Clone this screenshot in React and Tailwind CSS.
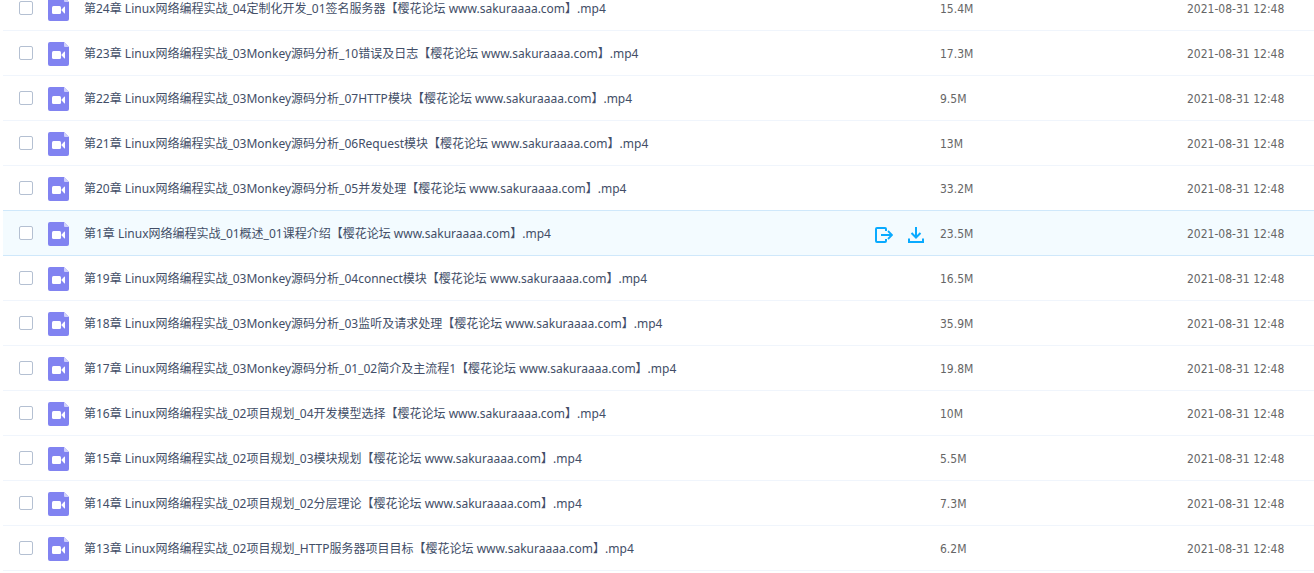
import { useState } from 'react';

const files = [
  { name: '第24章 Linux网络编程实战_04定制化开发_01签名服务器【樱花论坛 www.sakuraaaa.com】.mp4', size: '15.4M' },
  { name: '第23章 Linux网络编程实战_03Monkey源码分析_10错误及日志【樱花论坛 www.sakuraaaa.com】.mp4', size: '17.3M' },
  { name: '第22章 Linux网络编程实战_03Monkey源码分析_07HTTP模块【樱花论坛 www.sakuraaaa.com】.mp4', size: '9.5M' },
  { name: '第21章 Linux网络编程实战_03Monkey源码分析_06Request模块【樱花论坛 www.sakuraaaa.com】.mp4', size: '13M' },
  { name: '第20章 Linux网络编程实战_03Monkey源码分析_05并发处理【樱花论坛 www.sakuraaaa.com】.mp4', size: '33.2M' },
  { name: '第1章 Linux网络编程实战_01概述_01课程介绍【樱花论坛 www.sakuraaaa.com】.mp4', size: '23.5M' },
  { name: '第19章 Linux网络编程实战_03Monkey源码分析_04connect模块【樱花论坛 www.sakuraaaa.com】.mp4', size: '16.5M' },
  { name: '第18章 Linux网络编程实战_03Monkey源码分析_03监听及请求处理【樱花论坛 www.sakuraaaa.com】.mp4', size: '35.9M' },
  { name: '第17章 Linux网络编程实战_03Monkey源码分析_01_02简介及主流程1【樱花论坛 www.sakuraaaa.com】.mp4', size: '19.8M' },
  { name: '第16章 Linux网络编程实战_02项目规划_04开发模型选择【樱花论坛 www.sakuraaaa.com】.mp4', size: '10M' },
  { name: '第15章 Linux网络编程实战_02项目规划_03模块规划【樱花论坛 www.sakuraaaa.com】.mp4', size: '5.5M' },
  { name: '第14章 Linux网络编程实战_02项目规划_02分层理论【樱花论坛 www.sakuraaaa.com】.mp4', size: '7.3M' },
  { name: '第13章 Linux网络编程实战_02项目规划_HTTP服务器项目目标【樱花论坛 www.sakuraaaa.com】.mp4', size: '6.2M' }
];

function VideoIcon() {
  return (
    <svg className="mt-0.5 h-6 w-[21px] shrink-0" viewBox="0 0 21 24" aria-hidden="true">
      <path d="M2 0h14l5 5v17a2 2 0 0 1-2 2H2a2 2 0 0 1-2-2V2a2 2 0 0 1 2-2z" fill="#8183f1" />
      <path d="M16 0l5 5h-4a1 1 0 0 1-1-1z" fill="#cfd0fb" />
      <rect x="4" y="9" width="9" height="8" rx="1.5" fill="#fff" />
      <path d="M13.2 13l3-3.2q.8-.6.8.3v5.8q0 .9-.8.3z" fill="#fff" />
    </svg>
  );
}

function ShareIcon() {
  return (
    <svg className="h-4 w-[18px]" viewBox="0 0 18 16" fill="none" stroke="#09aaff" strokeWidth="2" aria-hidden="true">
      <path d="M11 4V2a1 1 0 0 0-1-1H2a1 1 0 0 0-1 1v12a1 1 0 0 0 1 1h8a1 1 0 0 0 1-1v-2" />
      <path d="M6 8h11M13 4l4 4-4 4" strokeWidth="1.8" />
    </svg>
  );
}

function DownloadIcon() {
  return (
    <svg className="h-4 w-4" viewBox="0 0 16 16" fill="none" stroke="#09aaff" strokeWidth="2" aria-hidden="true">
      <path d="M8 0v10M3.5 6L8 10.5 12.5 6" />
      <path d="M1 11.5V15h14v-3.5" />
    </svg>
  );
}

function FileRow({ file, active, beforeActive, onSelect }) {
  const [checked, setChecked] = useState(false);
  const line = active || beforeActive ? 'border-[#cfe8fb]' : 'border-[#f0f5fc]';

  return (
    <tr className={active ? 'bg-[#f3fbff]' : 'bg-white'} onClick={onSelect}>
      <td className={`h-[45px] border-b p-0 ${line}`}>
        <div className="flex items-center pl-4">
          <input className="size-3.5 shrink-0 appearance-none rounded-xs border border-[#b4c0d2] bg-white checked:bg-[#09aaff]" type="checkbox" aria-label={file.name} checked={checked} onChange={(e) => setChecked(e.target.checked)} />
          <span className="ml-[15px] mr-[15px] flex"><VideoIcon /></span>
          <a className="min-w-0 flex-1 truncate pt-0.5 font-['Noto_Sans','Noto_Sans_CJK_SC',sans-serif] text-[#424e67]" href="#file">{file.name}</a>
          {active && (
            <div className="mr-4 mt-1 flex items-center gap-[15px]">
              <button type="button" aria-label="分享"><ShareIcon /></button>
              <button type="button" aria-label="下载"><DownloadIcon /></button>
            </div>
          )}
        </div>
      </td>
      <td className={`border-b pt-0.5 ${line}`}>{file.size}</td>
      <td className={`border-b pt-0.5 ${line}`}>2021-08-31 12:48</td>
    </tr>
  );
}

export default function App() {
  const [current, setCurrent] = useState(5);

  return (
    <main className="overflow-hidden bg-white pl-[3px]">
      <table className="-mt-3.5 w-full table-fixed border-separate border-spacing-0 whitespace-nowrap text-left font-['DejaVu_Sans_Condensed','Noto_Sans','Noto_Sans_CJK_SC',sans-serif] text-xs text-[#666]">
        <colgroup>
          <col />
          <col className="w-[247px]" />
          <col className="w-[127px]" />
        </colgroup>
        <tbody>
          {files.map((file, i) => (
            <FileRow key={file.name} file={file} active={i === current} beforeActive={i + 1 === current} onSelect={() => setCurrent(i)} />
          ))}
        </tbody>
      </table>
    </main>
  );
}
